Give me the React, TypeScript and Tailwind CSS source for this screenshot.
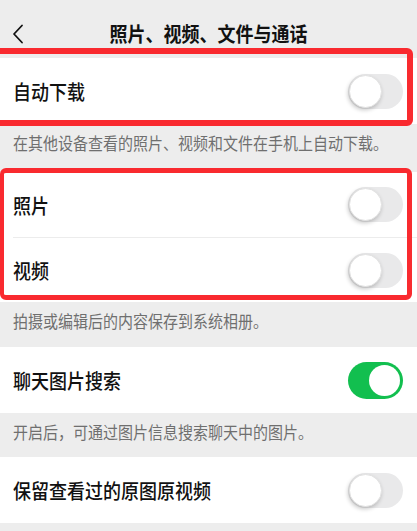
import React from 'react';

const font = { fontFamily: '"Noto Sans CJK SC", "Noto Sans", sans-serif' };

const Toggle: React.FC<{ on?: boolean }> = ({ on }) =>
  on ? (
    <div className="flex h-[37px] w-[55px] items-center justify-end rounded-full bg-[#12bf4f] p-[3px]">
      <div className="h-[31px] w-[31px] rounded-full bg-white" />
    </div>
  ) : (
    <div className="flex h-[35px] w-[55px] items-center rounded-full bg-[#e9e9ea] p-[1px]">
      <div className="h-[33px] w-[33px] rounded-full border border-[#e2e2e2] bg-white shadow-[-1px_2px_4px_rgba(0,0,0,0.22)]" />
    </div>
  );

const Row: React.FC<{ label: string; on?: boolean; h?: string }> = ({ label, on, h = 'h-[66px]' }) => (
  <div className={`flex ${h} items-center justify-between bg-white pl-[13px] pr-[14px]`}>
    <span className="inline-block scale-y-[1.12] text-[18px] font-medium leading-[22px] text-[#111]">{label}</span>
    <Toggle on={on} />
  </div>
);

const Caption: React.FC<{ text: string; h: string }> = ({ text, h }) => (
  <div className={`${h} px-[13px] pt-[10px]`}>
    <p className="scale-y-[1.1] text-[15px] leading-[18px] text-[#6f6f6f]">{text}</p>
  </div>
);

export default function App() {
  return (
    <div className="relative h-[531px] w-[417px] overflow-hidden bg-[#ededed]" style={font}>
      {/* header */}
      <div className="relative flex h-[58px] items-center justify-center">
        <svg className="absolute left-[11px] top-[24px]" width="14" height="20" viewBox="0 0 14 20" fill="none">
          <path d="M11 1.5 L3 10 L11 18.5" stroke="#111" strokeWidth="1.8" strokeLinecap="round" strokeLinejoin="round" />
        </svg>
        <h1 className="mb-[-8px] scale-y-[1.12] text-[18px] font-bold leading-[22px] text-[#111]">照片、视频、文件与通话</h1>
      </div>

      <Row label="自动下载" />
      <Caption h="h-[48px]" text="在其他设备查看的照片、视频和文件在手机上自动下载。" />

      <div className="bg-white">
        <Row label="照片" h="h-[65px]" />
        <div className="ml-[13px] h-px bg-[#ececec]" />
        <Row label="视频" h="h-[64px]" />
      </div>
      <Caption h="h-[45px]" text="拍摄或编辑后的内容保存到系统相册。" />

      <Row label="聊天图片搜索" on />
      <Caption h="h-[44px]" text="开启后，可通过图片信息搜索聊天中的图片。" />

      <Row label="保留查看过的原图原视频" />

      {/* annotation boxes */}
      <div className="pointer-events-none absolute left-[-10px] top-[48px] h-[78px] w-[423px] rounded-[6px] border-[6px] border-[#f92a2f]" />
      <div className="pointer-events-none absolute left-0 top-[168px] h-[132px] w-[412px] rounded-[6px] border-[5px] border-l-[4px] border-[#f92a2f]" />
    </div>
  );
}
